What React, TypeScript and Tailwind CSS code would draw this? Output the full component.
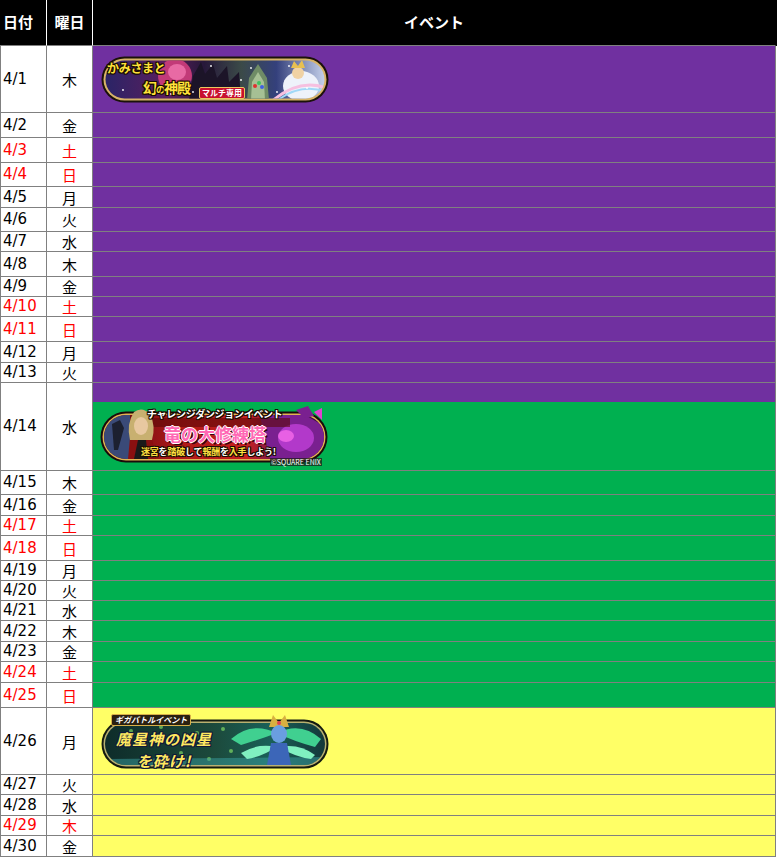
import React from 'react';

type Ev = 'purple' | 'green' | 'yellow';
type Day = {
  date: string;
  dow: string;
  h: string;
  ev: Ev;
  red?: boolean;
  banner?: 'temple' | 'tower' | 'star';
};

const days: Day[] = [
  { date: '4/1', dow: '木', h: 'h-[67px]', ev: 'purple', banner: 'temple' },
  { date: '4/2', dow: '金', h: 'h-[25px]', ev: 'purple' },
  { date: '4/3', dow: '土', h: 'h-[25px]', ev: 'purple', red: true },
  { date: '4/4', dow: '日', h: 'h-[24px]', ev: 'purple', red: true },
  { date: '4/5', dow: '月', h: 'h-[21px]', ev: 'purple' },
  { date: '4/6', dow: '火', h: 'h-[24px]', ev: 'purple' },
  { date: '4/7', dow: '水', h: 'h-[20px]', ev: 'purple' },
  { date: '4/8', dow: '木', h: 'h-[25px]', ev: 'purple' },
  { date: '4/9', dow: '金', h: 'h-[20px]', ev: 'purple' },
  { date: '4/10', dow: '土', h: 'h-[20px]', ev: 'purple', red: true },
  { date: '4/11', dow: '日', h: 'h-[25px]', ev: 'purple', red: true },
  { date: '4/12', dow: '月', h: 'h-[21px]', ev: 'purple' },
  { date: '4/13', dow: '火', h: 'h-[20px]', ev: 'purple' },
  { date: '4/14', dow: '水', h: 'h-[88px]', ev: 'green', banner: 'tower' },
  { date: '4/15', dow: '木', h: 'h-[24px]', ev: 'green' },
  { date: '4/16', dow: '金', h: 'h-[21px]', ev: 'green' },
  { date: '4/17', dow: '土', h: 'h-[20px]', ev: 'green', red: true },
  { date: '4/18', dow: '日', h: 'h-[25px]', ev: 'green', red: true },
  { date: '4/19', dow: '月', h: 'h-[20px]', ev: 'green' },
  { date: '4/20', dow: '火', h: 'h-[20px]', ev: 'green' },
  { date: '4/21', dow: '水', h: 'h-[20px]', ev: 'green' },
  { date: '4/22', dow: '木', h: 'h-[21px]', ev: 'green' },
  { date: '4/23', dow: '金', h: 'h-[20px]', ev: 'green' },
  { date: '4/24', dow: '土', h: 'h-[21px]', ev: 'green', red: true },
  { date: '4/25', dow: '日', h: 'h-[25px]', ev: 'green', red: true },
  { date: '4/26', dow: '月', h: 'h-[67px]', ev: 'yellow', banner: 'star' },
  { date: '4/27', dow: '火', h: 'h-[20px]', ev: 'yellow' },
  { date: '4/28', dow: '水', h: 'h-[21px]', ev: 'yellow' },
  { date: '4/29', dow: '木', h: 'h-[20px]', ev: 'yellow', red: true },
  { date: '4/30', dow: '金', h: 'h-[21px]', ev: 'yellow' },
];

const evBg: Record<Ev, string> = {
  purple: 'bg-[#7030a0]',
  green: 'bg-[#00b050]',
  yellow: 'bg-[#ffff66]',
};

const darkLine =
  '[text-shadow:1px_0_0_#1a0c00,-1px_0_0_#1a0c00,0_1px_0_#1a0c00,0_-1px_0_#1a0c00,1px_1px_0_#1a0c00,-1px_-1px_0_#1a0c00,1px_-1px_0_#1a0c00,-1px_1px_0_#1a0c00]';
const navyLine =
  '[text-shadow:1px_0_0_#101838,-1px_0_0_#101838,0_1px_0_#101838,0_-1px_0_#101838,1px_1px_0_#101838,-1px_-1px_0_#101838,1px_-1px_0_#101838,-1px_1px_0_#101838]';

const stars = [
  [12, 14], [22, 34], [34, 10], [48, 30], [58, 12], [92, 36], [110, 10], [128, 34],
  [150, 12], [176, 36], [188, 10], [206, 32], [70, 38], [140, 24],
];

function TempleBanner() {
  return (
    <div className="relative h-[47px] w-[228px]">
      <svg className="absolute inset-0" width="228" height="47" viewBox="0 0 228 47">
        <defs>
          <linearGradient id="tg" x1="0" x2="1" y1="0" y2="0">
            <stop offset="0" stopColor="#2a2466" />
            <stop offset="0.28" stopColor="#5b1e5e" />
            <stop offset="0.45" stopColor="#27183a" />
            <stop offset="0.62" stopColor="#3b4a48" />
            <stop offset="0.78" stopColor="#34407c" />
            <stop offset="1" stopColor="#c4d0ea" />
          </linearGradient>
          <clipPath id="tc">
            <rect x="4.5" y="4.5" width="219" height="38" rx="19" />
          </clipPath>
        </defs>
        <rect x="0.5" y="0.5" width="227" height="46" rx="23" fill="#1b120a" />
        <rect x="2.5" y="2.5" width="223" height="42" rx="21" fill="#d8b468" />
        <rect x="4.5" y="4.5" width="219" height="38" rx="19" fill="url(#tg)" />
        <g clipPath="url(#tc)">
          <ellipse cx="74" cy="20" rx="17" ry="17" fill="#c23a78" />
          <ellipse cx="76" cy="16" rx="9" ry="8" fill="#e86aa4" />
          <path d="M88 44 L92 20 L100 6 L104 18 L112 8 L116 22 L126 10 L128 26 L138 16 L140 44 Z" fill="#1c1428" />
          <path d="M146 44 L148 22 L157 8 L166 22 L168 44 Z" fill="#6f8c66" />
          <path d="M150 44 L151 26 L157 16 L163 26 L164 44 Z" fill="#a6c094" />
          <circle cx="154" cy="30" r="2" fill="#e03030" />
          <circle cx="158" cy="27" r="2" fill="#40c060" />
          <circle cx="161" cy="31" r="2" fill="#4060e0" />
          <ellipse cx="200" cy="30" rx="18" ry="15" fill="#eef2fa" />
          <circle cx="197" cy="17" r="6" fill="#f0d2a4" />
          <path d="M190 12 L193 5 L197 10 L201 4 L204 12 Z" fill="#e8c050" />
          <path d="M170 46 Q200 20 230 34" stroke="#f6c0e0" strokeWidth="3" fill="none" />
          <path d="M172 48 Q200 24 230 38" stroke="#a0d8f8" strokeWidth="2" fill="none" />
          {stars.map(([x, y]) => (
            <circle key={`${x}-${y}`} cx={x} cy={y} r="0.9" fill="#ffffff" />
          ))}
        </g>
      </svg>
      <span className={`absolute left-[6px] top-[6px] text-[12px] font-bold leading-none tracking-[-0.3px] text-[#ffe23a] ${darkLine}`}>
        かみさまと
      </span>
      <span className={`absolute left-[42px] top-[24px] text-[14px] font-bold leading-none tracking-[-1px] text-[#ffe23a] ${darkLine}`}>
        幻<span className="text-[9px]">の</span>神殿
      </span>
      <span className="absolute left-[98px] top-[31px] rounded-[2px] border border-[#e8c860] bg-[#c8102e] px-[2px] text-[8px] font-bold leading-[10px] text-white">
        マルチ専用
      </span>
    </div>
  );
}

function TowerBanner() {
  return (
    <div className="relative h-[60px] w-[228px]">
      <svg className="absolute inset-0" width="228" height="60" viewBox="0 0 228 60">
        <defs>
          <linearGradient id="rg" x1="0" x2="1" y1="0" y2="0">
            <stop offset="0" stopColor="#5a0c10" />
            <stop offset="0.35" stopColor="#b01818" />
            <stop offset="0.65" stopColor="#c82020" />
            <stop offset="0.82" stopColor="#5a1660" />
            <stop offset="1" stopColor="#3a0c40" />
          </linearGradient>
          <clipPath id="rc">
            <rect x="4" y="9" width="220" height="44" rx="22" />
          </clipPath>
        </defs>
        <rect x="0.5" y="5.5" width="227" height="51" rx="25.5" fill="#1a0a0a" />
        <rect x="2.5" y="7.5" width="223" height="47" rx="23.5" fill="#e2b452" />
        <rect x="4" y="9" width="220" height="44" rx="22" fill="url(#rg)" />
        <g clipPath="url(#rc)">
          <rect x="4" y="9" width="26" height="44" fill="#3a4a78" />
          <path d="M12 18 L20 14 L24 22 L18 44 L14 44 Z" fill="#1c2030" />
          <path d="M28 53 L30 32 L40 26 L52 32 L56 53 Z" fill="#8a1010" />
          <path d="M34 53 L38 34 L46 34 L48 53 Z" fill="#1a1a1a" />
          <path d="M160 10 L200 6 L224 20 L224 53 L170 53 Z" fill="#7a2090" />
          <ellipse cx="196" cy="32" rx="18" ry="14" fill="#c040d8" opacity="0.8" />
          <ellipse cx="186" cy="30" rx="8" ry="6" fill="#ff70f0" opacity="0.7" />
          <rect x="40" y="12" width="150" height="9" fill="#5a0808" opacity="0.6" />
        </g>
        <path d="M30 34 Q26 18 34 6 Q42 0 50 8 Q56 20 52 34 Z" fill="#c8b070" />
        <ellipse cx="41" cy="20" rx="7" ry="9" fill="#e8c8a0" />
        <path d="M196 4 L208 0 L214 10 L204 12 Z" fill="#7a2090" />
        <path d="M214 6 L222 2 L222 14 Z" fill="#e040d0" />
      </svg>
      <span className={`absolute left-[47px] top-[3px] text-[10px] font-bold leading-none tracking-[-0.3px] text-white ${darkLine}`}>
        チャレンジダンジョンイベント
      </span>
      <span className="absolute left-[64px] top-[19px] text-[17px] font-bold leading-none text-[#ff68b4] [text-shadow:1px_0_0_#fff,-1px_0_0_#fff,0_1px_0_#fff,0_-1px_0_#fff,2px_2px_0_#3a0010]">
        竜の大修練塔
      </span>
      <span className={`absolute left-[41px] top-[41px] text-[9px] font-bold leading-none tracking-[-0.2px] text-white ${darkLine}`}>
        <span className="text-[#ffe040]">迷宮</span>を<span className="text-[#ffe040]">踏破</span>して<span className="text-[#ffe040]">報酬</span>を<span className="text-[#ffe040]">入手</span>しよう!
      </span>
      <span className="absolute left-[170px] top-[52px] bg-[#1a1a1a]/70 px-[1px] text-[7px] leading-[8px] text-white">
        ©SQUARE ENIX
      </span>
    </div>
  );
}

const sparks = [
  [30, 18], [46, 44], [60, 14], [80, 40], [96, 20], [108, 46], [122, 16], [130, 38], [72, 28],
];

function StarBanner() {
  return (
    <div className="relative h-[56px] w-[228px]">
      <svg className="absolute inset-0" width="228" height="56" viewBox="0 0 228 56">
        <defs>
          <linearGradient id="sg" x1="0" x2="1" y1="0" y2="0">
            <stop offset="0" stopColor="#0e2c2a" />
            <stop offset="0.5" stopColor="#1c4a3c" />
            <stop offset="0.75" stopColor="#1a6058" />
            <stop offset="1" stopColor="#14383a" />
          </linearGradient>
          <clipPath id="sc">
            <rect x="4" y="10" width="220" height="42" rx="21" />
          </clipPath>
        </defs>
        <rect x="0.5" y="6.5" width="227" height="49" rx="24.5" fill="#141a10" />
        <rect x="2.5" y="8.5" width="223" height="45" rx="22.5" fill="#b8b070" />
        <rect x="4" y="10" width="220" height="42" rx="21" fill="url(#sg)" />
        <g clipPath="url(#sc)">
          {sparks.map(([x, y]) => (
            <circle key={`${x}-${y}`} cx={x} cy={y} r="2" fill="#9aff70" opacity="0.55" />
          ))}
          <path d="M4 46 L224 44 L224 52 L4 52 Z" fill="#3aa0a0" opacity="0.5" />
          <path d="M130 26 Q150 8 176 20 Q160 26 140 32 Z" fill="#40d090" />
          <path d="M220 26 Q200 8 176 20 Q192 28 214 34 Z" fill="#40d090" />
          <path d="M140 40 Q156 30 176 34 Q160 44 146 46 Z" fill="#80f0c0" />
          <path d="M214 42 Q198 30 178 34 Q194 44 210 46 Z" fill="#80f0c0" />
          <path d="M166 52 L170 30 L186 30 L190 52 Z" fill="#3c66b8" />
        </g>
        <path d="M168 14 L172 2 L178 10 L184 2 L188 14 Z" fill="#d8b040" />
        <ellipse cx="178" cy="21" rx="8" ry="9" fill="#6a9ee0" />
        <circle cx="178" cy="10" r="2" fill="#e04050" />
      </svg>
      <span className="absolute left-[10px] top-[1px] rounded-[2px] border border-[#d8b048] bg-[#2a2010] px-[3px] text-[8px] font-bold italic leading-[10px] text-white">
        ギガバトルイベント
      </span>
      <span className={`absolute left-[12px] top-[15px] w-[102px] text-center text-[15px] font-bold italic leading-[22px] tracking-[1px] text-[#ffe860] ${navyLine}`}>
        魔星神の凶星
        <br />
        を砕け!
      </span>
    </div>
  );
}

function EventCell({ d }: { d: Day }) {
  if (d.banner === 'tower') {
    return (
      <div className="flex w-[683px] shrink-0 flex-col border-r border-b border-[#808080]">
        <div className="h-[19px] bg-[#7030a0]" />
        <div className="flex flex-1 items-center bg-[#00b050] pl-[7px]">
          <TowerBanner />
        </div>
      </div>
    );
  }
  return (
    <div className={`flex w-[683px] shrink-0 items-center border-r border-b border-[#808080] pl-[8px] ${evBg[d.ev]}`}>
      {d.banner === 'temple' && <TempleBanner />}
      {d.banner === 'star' && <StarBanner />}
    </div>
  );
}

export default function App() {
  return (
    <div className="w-[777px] bg-white font-['Noto_Sans_CJK_JP','Noto_Sans',sans-serif]">
      {/* Header */}
      <div className="flex h-[46px] bg-black text-[15px] font-bold text-white">
        <div className="flex w-[47px] shrink-0 items-center border-r border-b border-r-white border-b-[#808080] pl-[3px]">
          日付
        </div>
        <div className="flex w-[46px] shrink-0 items-center justify-center border-r border-b border-r-white border-b-[#808080]">
          曜日
        </div>
        <div className="flex w-[683px] shrink-0 items-center justify-center border-r border-b border-r-black border-b-[#808080]">
          イベント
        </div>
      </div>

      {days.map((d) => (
        <div key={d.date} className={`flex ${d.h} text-[15px]`}>
          <div
            className={`flex w-[47px] shrink-0 items-center border-l border-r border-b border-[#808080] pl-[2px] font-['DejaVu_Sans','Noto_Sans_CJK_JP',sans-serif] leading-none ${
              d.red ? 'text-[#ff0000]' : 'text-black'
            }`}
          >
            {d.date}
          </div>
          <div
            className={`flex w-[46px] shrink-0 items-center justify-center border-r border-b border-[#808080] leading-none ${
              d.red ? 'text-[#ff0000]' : 'text-black'
            }`}
          >
            {d.dow}
          </div>
          <EventCell d={d} />
        </div>
      ))}
    </div>
  );
}
